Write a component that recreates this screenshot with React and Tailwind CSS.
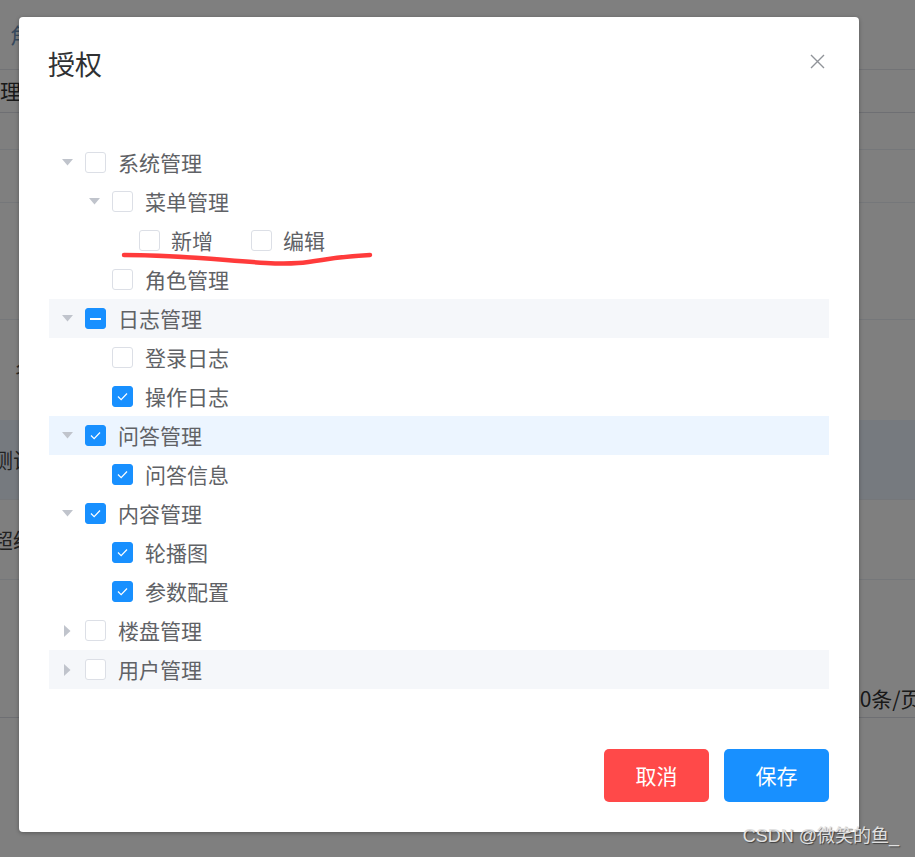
import React from 'react';

const FONT = "font-['Noto_Sans_CJK_SC','Noto_Sans',sans-serif]";

const tree = [
  { label: '系统管理', level: 0, arrow: 'down', state: 'none' },
  { label: '菜单管理', level: 1, arrow: 'down', state: 'none' },
  { level: 2, items: [{ label: '新增', state: 'none' }, { label: '编辑', state: 'none' }] },
  { label: '角色管理', level: 1, state: 'none' },
  { label: '日志管理', level: 0, arrow: 'down', state: 'half', bg: 'bg-[#f5f7fa]' },
  { label: '登录日志', level: 1, state: 'none' },
  { label: '操作日志', level: 1, state: 'checked' },
  { label: '问答管理', level: 0, arrow: 'down', state: 'checked', bg: 'bg-[#ecf5ff]' },
  { label: '问答信息', level: 1, state: 'checked' },
  { label: '内容管理', level: 0, arrow: 'down', state: 'checked' },
  { label: '轮播图', level: 1, state: 'checked' },
  { label: '参数配置', level: 1, state: 'checked' },
  { label: '楼盘管理', level: 0, arrow: 'right', state: 'none' },
  { label: '用户管理', level: 0, arrow: 'right', state: 'none', bg: 'bg-[#f5f7fa]' },
];

const indent = ['pl-0', 'pl-[27px]', 'pl-[54px]'];

function Checkbox({ state }) {
  if (state === 'checked') {
    return (
      <span className="w-[21px] h-[21px] rounded-[3px] bg-[#1890ff] border border-[#1890ff] flex items-center justify-center shrink-0">
        <svg width="21" height="21" viewBox="0 0 21 21">
          <path d="M5.5 10.5 L9 14 L15.5 7.2" fill="none" stroke="#fff" strokeWidth="1.3" />
        </svg>
      </span>
    );
  }
  if (state === 'half') {
    return (
      <span className="w-[21px] h-[21px] rounded-[3px] bg-[#1890ff] border border-[#1890ff] flex items-center justify-center shrink-0">
        <span className="w-[11px] h-[2px] bg-white" />
      </span>
    );
  }
  return <span className="w-[21px] h-[21px] rounded-[3px] bg-white border border-[#dcdfe6] shrink-0" />;
}

function Caret({ dir }) {
  return (
    <span className="w-[36px] h-[39px] flex items-center justify-center shrink-0">
      {dir === 'down' && (
        <svg width="11" height="7" viewBox="0 0 11 7">
          <path d="M0 0 L11 0 L5.5 6.5 Z" fill="#c0c4cc" />
        </svg>
      )}
      {dir === 'right' && (
        <svg width="7" height="12" viewBox="0 0 7 12">
          <path d="M0 0 L6.5 6 L0 12 Z" fill="#c0c4cc" />
        </svg>
      )}
    </span>
  );
}

function TreeRow({ node }) {
  return (
    <div className={`h-[39px] flex items-center ${indent[node.level]} ${node.bg || ''}`}>
      <Caret dir={node.arrow} />
      {node.items ? (
        node.items.map((it, i) => (
          <div key={it.label} className={`flex items-center ${i === 0 ? 'w-[112px]' : ''}`}>
            <Checkbox state={it.state} />
            <span className="ml-[11px] text-[21px] leading-[39px] text-[#606266]">{it.label}</span>
          </div>
        ))
      ) : (
        <>
          <Checkbox state={node.state} />
          <span className="ml-[12px] text-[21px] leading-[39px] text-[#606266]">{node.label}</span>
        </>
      )}
    </div>
  );
}

function BackgroundPage() {
  return (
    <div className="flex flex-col text-[21px] text-[#333]">
      <div className="h-[70px] border-b border-[#e4e7ed] flex items-center pl-[10px] text-[#6f93ba]">角色管理</div>
      <div className="h-[43px] border-b border-[#dcdfe6] flex items-center">理</div>
      <div className="h-[37px] border-b border-[#ebeef5]" />
      <div className="h-[53px] border-b border-[#ebeef5]" />
      <div className="h-[117px] border-b border-[#ebeef5]" />
      <div className="h-[100px] flex items-center pl-[15px] text-[#555]">名称</div>
      <div className="h-[80px] bg-[#ecf5ff] border-b border-[#ebeef5] flex items-center -ml-[8px] text-[#444]">测试角色</div>
      <div className="h-[80px] border-b border-[#ebeef5] flex items-center -ml-[8px] text-[#444]">超级管理员</div>
      <div className="h-[100px]" />
      <div className="h-[38px] border-b border-[#dcdfe6] flex items-center pl-[848px] whitespace-nowrap">10条/页</div>
    </div>
  );
}

export default function App() {
  return (
    <div className={`relative w-[915px] h-[857px] overflow-hidden bg-white ${FONT}`}>
      <BackgroundPage />
      <div className="absolute inset-0 bg-black/50" />

      {/* dialog */}
      <div className="absolute left-[19px] top-[17px] w-[840px] h-[815px] bg-white rounded-[4px] shadow-[0_1px_4px_rgba(0,0,0,0.3)] flex flex-col">
        <div className="relative pt-[29px] pl-[29px] pr-[30px]">
          <h2 className="text-[27px] leading-[36px] text-[#303133]">授权</h2>
          <button className="absolute right-[34px] top-[37px] w-[15px] h-[15px]">
            <svg width="15" height="15" viewBox="0 0 15 15">
              <path d="M1 1 L14 14 M14 1 L1 14" stroke="#909399" strokeWidth="1.4" />
            </svg>
          </button>
        </div>

        <div className="relative pt-[61px] pl-[30px] pr-[30px]">
          {tree.map((n, i) => (
            <TreeRow key={i} node={n} />
          ))}
          {/* hand-drawn annotation */}
          <svg className="absolute left-0 top-0 pointer-events-none" width="840" height="700">
            <path
              d="M105 173 C 160 173, 200 178, 247 181 S 300 175, 351 173"
              fill="none"
              stroke="#ff3b3b"
              strokeWidth="4.5"
              strokeLinecap="round"
            />
          </svg>
        </div>

        <div className="mt-[60px] pl-[30px] pr-[30px] flex justify-end gap-[15px]">
          <button className="w-[105px] h-[53px] rounded-[5px] bg-[#ff4949] text-white text-[21px]">取消</button>
          <button className="w-[105px] h-[53px] rounded-[5px] bg-[#1890ff] text-white text-[21px]">保存</button>
        </div>
      </div>

      <div className="absolute right-[16px] top-[823px] text-[18px] text-[#e0e0e0] [text-shadow:1px_1px_1px_rgba(0,0,0,0.5)] font-['Liberation_Sans','Noto_Sans_CJK_SC',sans-serif]">
        CSDN @微笑的鱼_
      </div>
    </div>
  );
}
